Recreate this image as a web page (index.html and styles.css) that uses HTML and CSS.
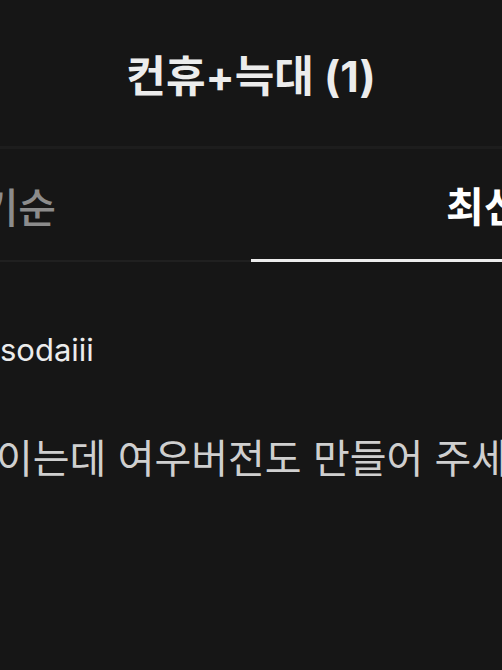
FILE: index.html
```html
<!DOCTYPE html>
<html lang="ko">
<head>
<meta charset="utf-8">
<title>컨휴+늑대 (1)</title>
<link rel="stylesheet" href="styles.css">
</head>
<body>
<div class="page">
  <header class="header">
    <h1 class="title">컨휴+늑대 (1)</h1>
  </header>
  <nav class="tabs">
    <div class="tab">인기순</div>
    <div class="tab active">최신순</div>
  </nav>
  <section class="comments">
    <article class="comment">
      <div class="author">sodaiii</div>
      <p class="text">이는데 여우버전도 만들어 주세요</p>
    </article>
  </section>
</div>
</body>
</html>
```
FILE: styles.css
```css
html, body {
  margin: 0;
  padding: 0;
  background: #161616;
  overflow: hidden;
}
body {
  width: 502px;
  height: 670px;
  font-family: Inter, "Noto Sans CJK KR", sans-serif;
}
.page {
  width: 1006px;
  margin-left: -252px;
}
.header {
  height: 146px;
  display: flex;
  align-items: center;
  justify-content: center;
  border-bottom: 3px solid #1d1d1d;
}
.title {
  margin: 0;
  font-size: 43px;
  font-weight: 700;
  color: #ececec;
  letter-spacing: 0;
}
.tabs {
  display: grid;
  grid-template-columns: 1fr 1fr;
}
.tab {
  height: 111px;
  display: flex;
  align-items: center;
  justify-content: center;
  font-size: 41px;
  font-weight: 500;
  color: #8c8c8c;
  border-bottom: 2px solid #202020;
}
.tab.active {
  color: #ffffff;
  font-weight: 700;
  border-bottom: 3px solid #ececec;
  height: 110px;
}
.comments {
  padding-left: 252px;
}
.comment {
  padding-top: 68px;
}
.author {
  font-size: 31px;
  color: #ececec;
  line-height: 40px;
}
.text {
  margin: 64px 0 0 -4px;
  font-size: 40px;
  color: #cfcfcf;
  line-height: 50px;
  white-space: nowrap;
}
```
